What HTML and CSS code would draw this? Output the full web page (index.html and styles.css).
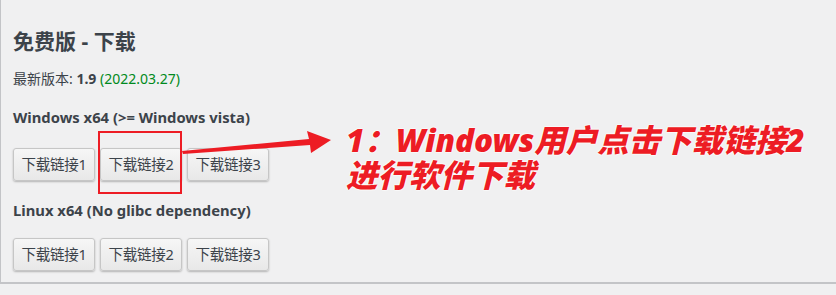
FILE: index.html
```html
<!DOCTYPE html>
<html lang="zh-CN">
<head>
	<meta charset="UTF-8">
	<title>免费版 - 下载</title>
	<link rel="stylesheet" href="styles.css">
</head>
<body>
	<div id="wrapper">
		<div class="content">
			<h2 class="title">免费版 - 下载</h2>
			<p class="version">最新版本: <b>1.9</b> <span class="date">(2022.03.27)</span></p>

			<h4 class="os">Windows x64 (&gt;= Windows vista)</h4>
			<div class="btn-row">
				<a class="btn">下载链接1</a>
				<a class="btn mark">下载链接2</a>
				<a class="btn">下载链接3</a>
			</div>

			<h4 class="os">Linux x64 (No glibc dependency)</h4>
			<div class="btn-row">
				<a class="btn">下载链接1</a>
				<a class="btn">下载链接2</a>
				<a class="btn">下载链接3</a>
			</div>
		</div>

		<!-- 标注：箭头 + 说明文字 -->
		<svg class="arrow" width="160" height="40" viewBox="0 0 160 40">
			<path d="M1 24 L128 12 L126 4 L150 13 L130 26 L129 18 L2 27 Z" fill="#ed1c24"/>
		</svg>
		<div class="note">
			<div class="note-line">1：Windows用户点击下载链接2</div>
			<div class="note-line">进行软件下载</div>
		</div>
	</div>
</body>
</html>
```

FILE: styles.css
```css
body,div,h2,h4,p{
    margin: 0;
    padding: 0;
}
body{
    background: #f0f0f1;
    color: #3c434a;
    font-family: "Noto Sans", "Noto Sans CJK SC", sans-serif;
    font-size: 14px;
}
a{
    text-decoration: none;
}
#wrapper{
    position: relative;
    width: 836px;
    height: 295px;
    overflow: hidden;
}
.content{
    height: 282px;
    border-left: 1px solid #c3c4c7;
    border-bottom: 2px solid #c3c4c7;
    padding: 0 0 0 12px;
}
.title{
    padding-top: 25px;
    font-size: 21px;
    line-height: 32px;
    font-weight: bold;
    color: #3c434a;
}
.version{
    margin-top: 11px;
    line-height: 22px;
}
.version b{
    font-weight: bold;
}
.date{
    color: #008a20;
}
.os{
    margin-top: 16px;
    font-size: 14.8px;
    line-height: 22px;
    font-weight: bold;
}
.btn-row{
    display: flex;
    gap: 5px;
    margin-top: 20px;
}
.btn-row + .os{
    margin-top: 18px;
}
.os + .btn-row{
    margin-top: 17px;
}
.os:first-of-type + .btn-row{
    margin-top: 20px;
}
.btn{
    display: block;
    position: relative;
    width: 80px;
    height: 31px;
    line-height: 31px;
    text-align: center;
    color: #3c434a;
    font-size: 14.5px;
    letter-spacing: -0.3px;
    border: 1px solid #c6c6c6;
    border-radius: 3px;
    background: linear-gradient(#f6f6f6, #e8e8e8);
    box-shadow: 0 1px 2px rgba(0,0,0,.25);
}
.btn.mark::after{
    content: "";
    position: absolute;
    left: -3px;
    top: -18px;
    width: 80px;
    height: 59px;
    border: 2px solid #ed1c24;
}
.arrow{
    position: absolute;
    left: 181px;
    top: 127px;
}
.note{
    position: absolute;
    left: 346px;
    top: 123px;
    display: flex;
    flex-direction: column;
    gap: 1px;
}
.note-line{
    height: 34px;
    font-size: 31.5px;
    line-height: 34px;
    font-weight: 900;
    font-style: italic;
    color: #ed1c24;
    text-shadow: 0 0 2px #fff, 0 0 2px #fff, 0 0 2px #fff;
}
```
